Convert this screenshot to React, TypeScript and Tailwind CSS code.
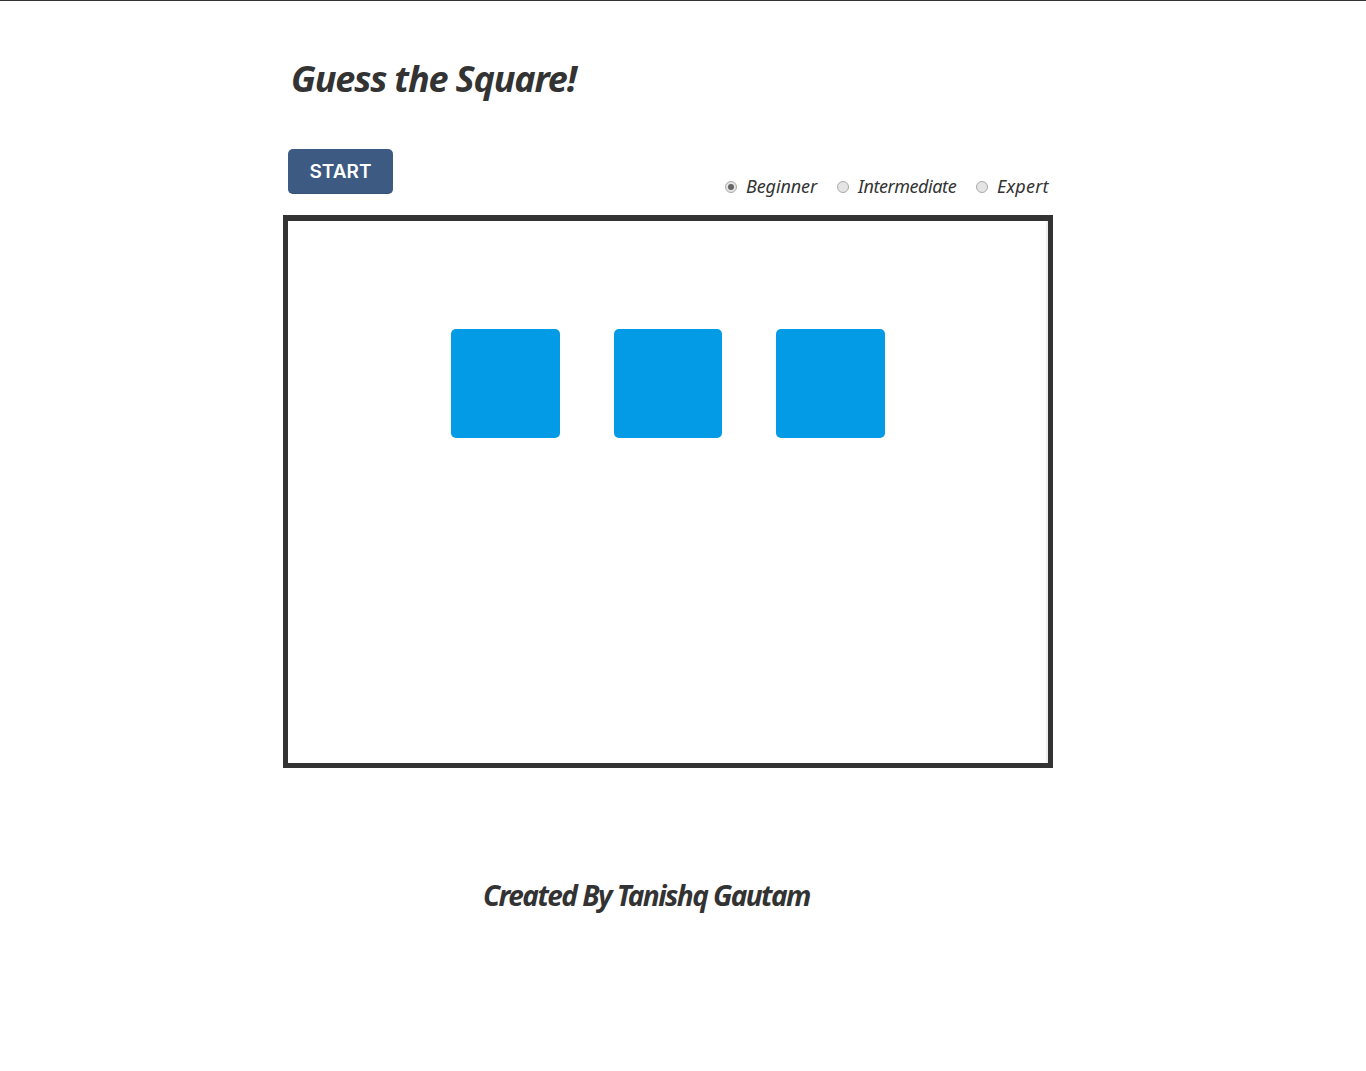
export default function App() {
  const script = "font-['Noto_Sans',cursive] italic text-[#333]";
  const levels = [
    { label: "Beginner", checked: true, w: "w-[72px] tracking-[-0.1px]" },
    { label: "Intermediate", checked: false, w: "w-[99px] tracking-[-0.43px]" },
    { label: "Expert", checked: false, w: "w-[53px] tracking-[0.2px]" },
  ];
  return (
    <div className="min-h-[1071px] bg-white border-t border-[#333] font-['Liberation_Sans',sans-serif]">
      <div className="w-[770px] ml-[283px]">
        <h1 className={`${script} pt-[54px] pl-[8px] h-[148px] text-[36px] leading-[48px] font-bold tracking-[-1.15px] m-0`}>
          Guess the Square!
        </h1>
        <div className="flex items-start justify-between pl-[5px] pr-[3px] h-[66px]">
          <button className="w-[105px] h-[45px] pt-[2px] rounded-[5px] bg-[#3c5a82] border-b border-[#365176] text-white text-[19px] font-semibold font-['Inter',sans-serif]">
            START
          </button>
          <div className="flex items-center gap-[19px] mt-[23px] h-[28px]">
            {levels.map((l) => (
              <label key={l.label} className="flex items-center gap-[9px]">
                <span className="w-[12px] h-[12px] mt-[2px] rounded-full border border-[#aaa] bg-[#e4e4e4] flex items-center justify-center">
                  {l.checked && <span className="w-[6px] h-[6px] rounded-full bg-[#666]" />}
                </span>
                <span className={`${script} ${l.w} text-[18px] leading-[24px] whitespace-nowrap`}>{l.label}</span>
              </label>
            ))}
          </div>
        </div>
        <div className="h-[553px] border-[5px] border-t-[6px] border-[#333] bg-white shadow-[inset_-2px_0_0_#eeeeee] flex justify-center items-start pt-[108px] gap-[54px]">
          <div className="w-[108.5px] h-[108.5px] rounded-[5px] bg-[#039be5]" />
          <div className="w-[108.5px] h-[108.5px] rounded-[5px] bg-[#039be5]" />
          <div className="w-[108.5px] h-[108.5px] rounded-[5px] bg-[#039be5]" />
        </div>
        <p className={`${script} mt-[105px] ml-[200px] text-[28px] leading-[44px] font-bold tracking-[-1.55px]`}>
          Created By Tanishq Gautam
        </p>
      </div>
    </div>
  );
}
